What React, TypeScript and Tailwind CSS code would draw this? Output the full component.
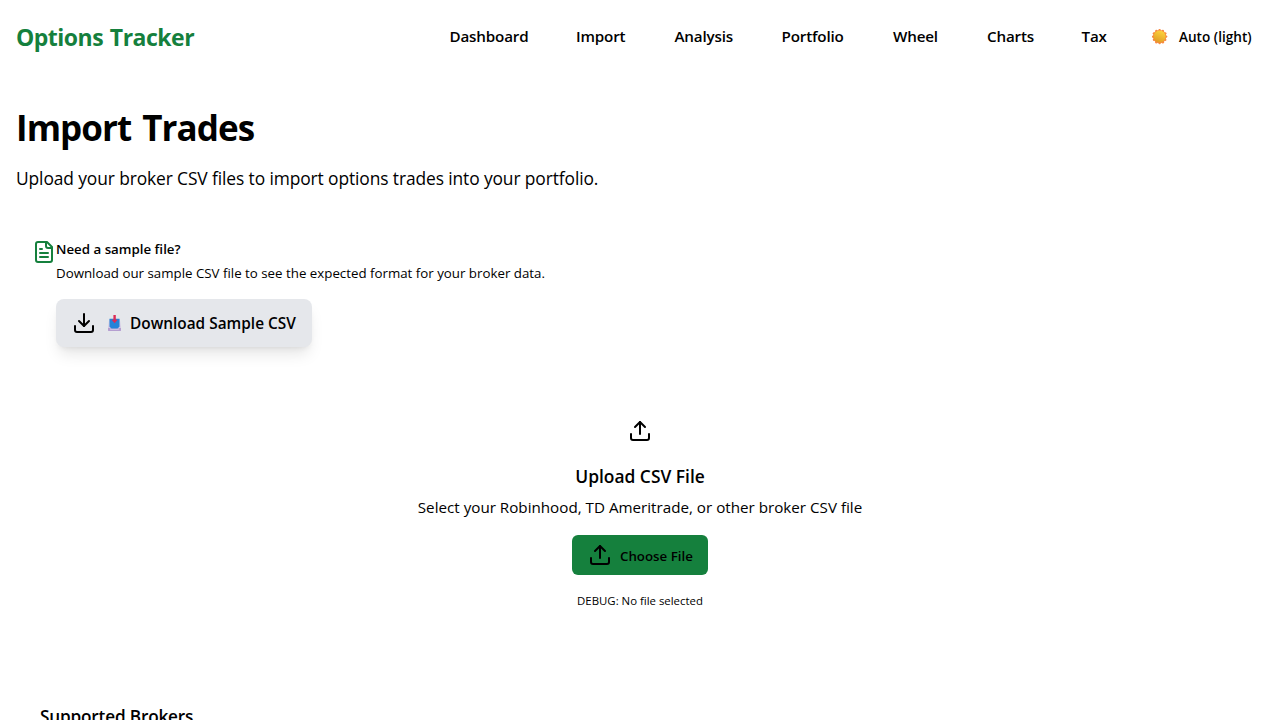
import React from "react";

const NAV = [
  { label: "Dashboard", cls: "w-[78.5px]" },
  { label: "Import", cls: "w-[50.5px]" },
  { label: "Analysis", cls: "w-[59px]" },
  { label: "Portfolio", cls: "w-[63.5px]" },
  { label: "Wheel", cls: "w-[46px]" },
  { label: "Charts", cls: "w-[46.5px]" },
  { label: "Tax", cls: "w-[24px]" },
];

function Icon({ className = "", children }: { className?: string; children: React.ReactNode }) {
  return (
    <svg
      className={`size-6 shrink-0 ${className}`}
      viewBox="0 0 24 24"
      fill="none"
      stroke="currentColor"
      strokeWidth="2"
      strokeLinecap="round"
      strokeLinejoin="round"
    >
      {children}
    </svg>
  );
}

function UploadIcon() {
  return (
    <Icon>
      <path d="M21 15v4a2 2 0 0 1-2 2H5a2 2 0 0 1-2-2v-4" />
      <path d="m17 8-5-5-5 5" />
      <path d="M12 3v12" />
    </Icon>
  );
}

function DownloadIcon() {
  return (
    <Icon>
      <path d="M21 15v4a2 2 0 0 1-2 2H5a2 2 0 0 1-2-2v-4" />
      <path d="m7 10 5 5 5-5" />
      <path d="M12 15V3" />
    </Icon>
  );
}

function FileIcon() {
  return (
    <Icon className="text-[#15803d]">
      <path d="M15 2H6a2 2 0 0 0-2 2v16a2 2 0 0 0 2 2h12a2 2 0 0 0 2-2V7Z" />
      <path d="M14 2v4a2 2 0 0 0 2 2h4" />
      <path d="M10 9H8" />
      <path d="M16 13H8" />
      <path d="M16 17H8" />
    </Icon>
  );
}

function SunEmoji() {
  const rays = Array.from({ length: 12 }, (_, i) => (i * Math.PI) / 6);
  return (
    <svg className="size-4 shrink-0" viewBox="0 0 16 16">
      <defs>
        <linearGradient id="sun" x1="0.7" y1="0" x2="0.3" y2="1">
          <stop offset="0" stopColor="#fcd53f" />
          <stop offset="1" stopColor="#e09a24" />
        </linearGradient>
      </defs>
      {rays.map((a) => (
        <circle key={a} cx={7.6 + 6.5 * Math.cos(a)} cy={7.6 + 6.5 * Math.sin(a)} r="1.2" fill="#f98a45" />
      ))}
      <circle cx="7.6" cy="7.6" r="6.7" fill="#f58a3c" />
      <circle cx="7.6" cy="7.6" r="6" fill="url(#sun)" />
    </svg>
  );
}

function InboxEmoji() {
  return (
    <svg className="h-4 w-[13px] shrink-0" viewBox="0 0 13 16">
      <path d="M1.2 4h10.6L13 12.5V16H0v-3.5Z" fill="#d5cbe4" />
      <path d="M0 13h13v2.2a.8.8 0 0 1-.8.8H.8a.8.8 0 0 1-.8-.8Z" fill="#b59fd0" />
      <path d="M2.2 14.2h8.6" stroke="#d9d0e8" strokeWidth="1" />
      <path d="M1.5 3.8h10v8l-2 1.7h-6l-2-1.7Z" fill="#2583d8" />
      <path d="M5.4 0h2.4v4.8h1.9L6.6 8.2 3.6 4.8h1.8Z" fill="#dc2b56" />
    </svg>
  );
}

export default function App() {
  return (
    <div className="h-[720px] overflow-hidden bg-white font-['Open_Sans','Noto_Sans',sans-serif] text-black">
      <header className="flex h-[74px] items-center justify-between pl-4 pr-7">
        <div className="whitespace-nowrap text-[23px] leading-8 font-bold tracking-[-0.5px] [word-spacing:1.2px] text-[#15803d]">
          Options Tracker
        </div>
        <div className="flex items-center">
          <nav className="flex gap-12 pr-[46.5px] pb-[2px] text-[15.2px] leading-6 font-semibold tracking-[-0.17px]">
            {NAV.map((n) => (
              <a key={n.label} className={`${n.cls} whitespace-nowrap`}>
                {n.label}
              </a>
            ))}
          </nav>
          <button className="flex items-center gap-[11px]">
            <SunEmoji />
            <span className="w-[73px] whitespace-nowrap text-left text-[13.6px] leading-5 font-semibold">
              Auto (light)
            </span>
          </button>
        </div>
      </header>

      <main className="px-4 pt-[34px]">
        <h1 className="text-[35px] leading-10 font-bold tracking-[-0.95px] [word-spacing:3px]">
          Import Trades
        </h1>
        <p className="mt-4 text-[17.4px] leading-7 tracking-[-0.11px]">
          Upload your broker CSV files to import options trades into your portfolio.
        </p>

        <section className="mt-[47px] flex px-4">
          <div className="pt-[1px]">
            <FileIcon />
          </div>
          <div>
            <h3 className="text-[13.3px] leading-5 font-semibold">Need a sample file?</h3>
            <p className="mt-1 text-[13.3px] leading-5">
              Download our sample CSV file to see the expected format for your broker data.
            </p>
            <button className="mt-4 flex h-12 w-64 items-center rounded-lg bg-gray-200 pl-4 shadow-lg">
              <DownloadIcon />
              <span className="flex items-center gap-[9px] pl-3">
                <InboxEmoji />
                <span className="whitespace-nowrap pt-[2px] text-[15.4px] leading-6 font-semibold">
                  Download Sample CSV
                </span>
              </span>
            </button>
          </div>
        </section>

        <section className="mt-[72px] flex flex-col items-center">
          <UploadIcon />
          <h3 className="mt-[19px] text-[17.4px] leading-7 font-semibold">Upload CSV File</h3>
          <p className="mt-[5px] text-[15.2px] leading-6">
            Select your Robinhood, TD Ameritrade, or other broker CSV file
          </p>
          <button className="mt-4 flex h-10 w-[136px] items-center gap-2 rounded-md bg-[#15803d] pl-4">
            <UploadIcon />
            <span className="whitespace-nowrap pt-[2px] text-[13.3px] leading-5 font-semibold">Choose File</span>
          </button>
          <p className="mt-4 text-[11.4px] leading-5">DEBUG: No file selected</p>
        </section>

        <h3 className="mt-[92px] pl-6 text-[17.2px] leading-7 font-semibold tracking-[-0.18px]">
          Supported Brokers
        </h3>
      </main>
    </div>
  );
}
